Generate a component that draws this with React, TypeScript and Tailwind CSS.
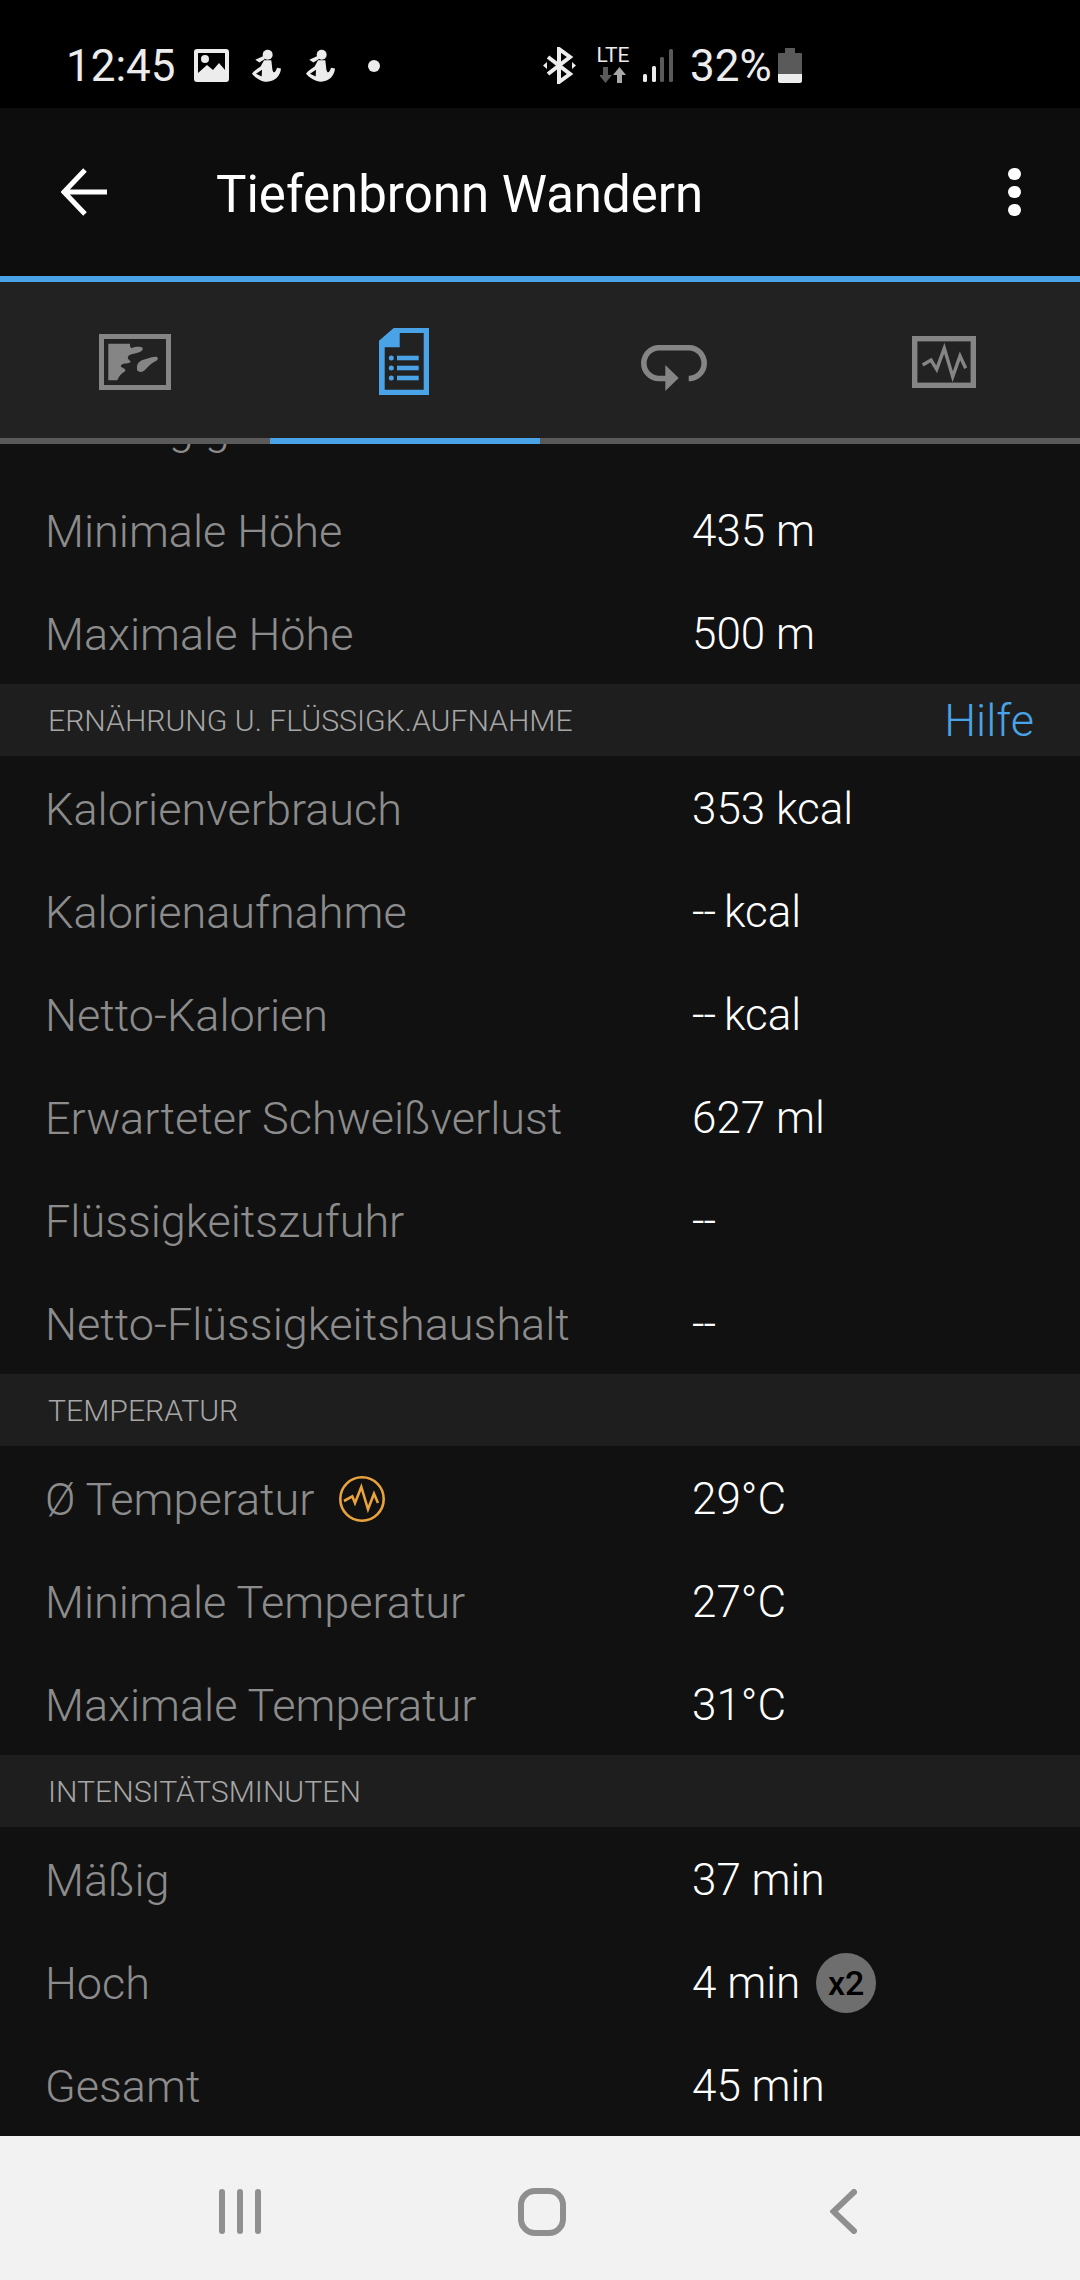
const FONT = "font-['Roboto',sans-serif]";

function Person() {
  return (
    <svg width="29" height="33" viewBox="0 0 87 98" fill="#ececec">
      <circle cx="47" cy="17" r="15" />
      <path d="M10 32 L36 20 L38 30 L22 40 Z" />
      <path
        fillRule="evenodd"
        d="M36 33 H58 L61 60 C63 72 70 74 75 56 L87 58 C85 80 70 96 45 98 C30 98 10 86 0 74 C4 66 14 60 26 52 Z M12 74 L30 62 L29 82 Z"
      />
    </svg>
  );
}

function StatusBar() {
  return (
    <div className="h-[108px] bg-black flex items-center pl-[66px] pt-[23px] text-[44px] leading-none text-[#ececec]">
      <span className="w-[128px]">12:45</span>
      <svg width="35" height="33" viewBox="0 0 35 33" className="-mt-[1px]">
        <path
          fill="#ececec"
          fillRule="evenodd"
          d="M3 0 H32 A3 3 0 0 1 35 3 V30 A3 3 0 0 1 32 33 H3 A3 3 0 0 1 0 30 V3 A3 3 0 0 1 3 0 Z M4 4 V24 L13 16 L19 21 L25 14 L31 21 V4 Z"
        />
        <circle cx="11" cy="10" r="4" fill="#ececec" />
      </svg>
      <div className="ml-[23px] -mt-[1px]">
        <Person />
      </div>
      <div className="ml-[25px] -mt-[1px]">
        <Person />
      </div>
      <div className="ml-[33px] w-[12px] h-[12px] rounded-full bg-[#ececec]" />

      <svg width="33" height="37" viewBox="0 0 33 37" className="ml-[163px]" fill="none" stroke="#ececec" strokeWidth="4">
        <path d="M5 10 L27 27 L16 35 V2 L27 10 L5 27" />
        <path d="M0 18.5 L4 15 V22 Z M33 18.5 L29 15 V22 Z" fill="#ececec" stroke="none" />
      </svg>
      <div className="ml-[20px] w-[34px] flex flex-col items-center -mt-[1px]">
        <span className="text-[21px] leading-[16px]">LTE</span>
        <svg width="26" height="16" viewBox="0 0 26 16" className="mt-[4px]">
          <path d="M3 0 H8 V8 H12 L5.5 16 L-1 8 H3 Z" fill="#5a5a5a" />
          <path d="M17 16 H22 V8 H26 L19.5 0 L13 8 H17 Z" fill="#a8a8a8" />
        </svg>
      </div>
      <svg width="30" height="33" viewBox="0 0 30 33" className="ml-[13px]">
        <rect x="0" y="25" width="4" height="8" rx="1.5" fill="#ececec" />
        <rect x="9" y="17" width="4" height="16" rx="1.5" fill="#ececec" />
        <rect x="17" y="8" width="4" height="25" rx="1.5" fill="#5a5a5a" />
        <rect x="26" y="0" width="4" height="33" rx="1.5" fill="#5a5a5a" />
      </svg>
      <span className="ml-[17px] w-[88px]">32%</span>
      <svg width="24" height="35" viewBox="0 0 24 35" className="-mt-[1px]">
        <path d="M7 0 H17 V5 H23 A1 1 0 0 1 24 6 V26 H0 V6 A1 1 0 0 1 1 5 H7 Z" fill="#5a5a5a" />
        <path d="M0 26 H24 V33 A2 2 0 0 1 22 35 H2 A2 2 0 0 1 0 33 Z" fill="#ececec" />
      </svg>
    </div>
  );
}

function AppBar() {
  return (
    <div className="h-[168px] bg-[#0d0d0d] flex items-center pl-[61px] pr-[59px]">
      <svg width="48" height="48" viewBox="0 0 48 48" fill="none" stroke="white" strokeWidth="5">
        <path d="M46 24 H3 M24 2 L3 24 L24 46" />
      </svg>
      <h1 className="ml-[107px] flex-1 text-[51px] leading-none text-white mt-[4px]">Tiefenbronn Wandern</h1>
      <div className="flex flex-col gap-[6px]">
        <div className="w-[13px] h-[12px] rounded-full bg-white" />
        <div className="w-[13px] h-[12px] rounded-full bg-white" />
        <div className="w-[13px] h-[12px] rounded-full bg-white" />
      </div>
    </div>
  );
}

function Tabs() {
  return (
    <div className="bg-[#222222] border-t-[6px] border-[#4aa3e6]">
      <div className="h-[156px] grid grid-cols-4">
        <div className="flex justify-start items-start pl-[99px] pt-[52px]">
          <svg width="72" height="56" viewBox="0 0 72 56" fill="#858585">
            <path fillRule="evenodd" d="M0 0 H72 V56 H0 Z M5 5 V51 H67 V5 Z" />
            <path d="M9.3 9.7 H31 C31 12 31 14 33 14 C36 13 41 12 43.7 14 C44 17 41 18 38 19 C34 20 30 20 29 23 C28 25 31 26 31.7 28 C29 30 26 29 24 30 C21 31 21 33 24 34 C27 35 27 37 25 38 C22 40 20 42 18.3 46.3 H9.3 Z" />
            <path d="M38 32 C39 28 42 26 47 25 C51 24 55 22 58 23 C60 25 58 27 55 28 C51 30 49 33 46 36 C43 39 39 38 38 36 Z" />
          </svg>
        </div>
        <div className="flex justify-start items-start pl-[109px] pt-[46px]">
          <svg width="50" height="67" viewBox="0 0 50 67" fill="#4aa3e6">
            <path fillRule="evenodd" d="M0 12.7 L14.7 0 H50 V67 H0 Z M20.7 5 V19.3 H5.7 V61.7 H44.7 V5 Z" />
            <rect x="18" y="27.7" width="21.7" height="4.6" />
            <rect x="18" y="37.7" width="21.7" height="4.6" />
            <rect x="18" y="47.7" width="21.7" height="4.6" />
            <circle cx="12.3" cy="30" r="2.5" />
            <circle cx="12.3" cy="40" r="2.5" />
            <circle cx="12.3" cy="50" r="2.5" />
          </svg>
        </div>
        <div className="flex justify-start items-start pl-[100px] pt-[63px]">
          <svg width="68" height="46" viewBox="0 0 68 46" fill="none">
            <path
              d="M27 33.5 H18 A15.4 15.4 0 0 1 18 2.8 H50 A15.4 15.4 0 0 1 50 33.5 H48.7"
              stroke="#858585"
              strokeWidth="5.6"
            />
            <path d="M25.3 20 L38.7 33 L25.3 46 Z" fill="#858585" />
          </svg>
        </div>
        <div className="flex justify-start items-start pl-[102px] pt-[54px]">
          <svg width="64" height="52" viewBox="0 0 64 52" fill="none" stroke="#858585">
            <rect x="2.7" y="2.7" width="58.6" height="46.6" strokeWidth="5.4" />
            <path d="M10.7 29 L19 24 L24.7 33.3 L32.3 12.3 L40.7 40.7 L48 20 L53.7 32.3" strokeWidth="3.4" />
          </svg>
        </div>
      </div>
      <div className="h-[6px] grid grid-cols-4 bg-[#5a5a5a]">
        <div />
        <div className="bg-[#4aa3e6]" />
      </div>
    </div>
  );
}

function Section({ title, help }: { title: string; help?: string }) {
  return (
    <div className="h-[72px] bg-[#1e1e1e] flex items-center justify-between pl-[48px] pr-[46px]">
      <span className="text-[30.2px] font-light text-[#a6a6a6] uppercase leading-none pt-[2px]">{title}</span>
      {help && <span className="text-[45px] font-light text-[#4aa3e6] leading-none">{help}</span>}
    </div>
  );
}

function Dashes() {
  return <span className="tracking-[-1px] -mr-[2px]">--</span>;
}

function Row({ label, value, labelIcon, valueIcon }: { label: string; value: React.ReactNode; labelIcon?: React.ReactNode; valueIcon?: React.ReactNode }) {
  return (
    <div className="h-[103px] flex items-center pl-[45px] font-light">
      <div className="w-[647px] flex items-center text-[45px] text-[#8c8c8c] leading-none pt-[3px]">
        {label}
        {labelIcon}
      </div>
      <div className="flex items-center text-[44px] text-white leading-none pt-[2px] whitespace-pre">
        {value}
        {valueIcon}
      </div>
    </div>
  );
}

function EffortIcon() {
  return (
    <svg width="46" height="46" viewBox="0 0 46 46" fill="none" stroke="#e8a33d" strokeWidth="2.6" className="ml-[25px]">
      <circle cx="23" cy="23" r="21.7" />
      <path d="M5 25 L13.3 20.3 L16 27 L22.3 11 L29 33.3 L35 17.7 L39 27" />
    </svg>
  );
}

function NavBar() {
  return (
    <div className="h-[144px] bg-[#f2f2f2] flex items-center pl-[219px] pt-[7px]">
      <div className="flex gap-[12px]">
        <div className="w-[6px] h-[45px] rounded-full bg-[#8f8f8f]" />
        <div className="w-[6px] h-[45px] rounded-full bg-[#8f8f8f]" />
        <div className="w-[6px] h-[45px] rounded-full bg-[#8f8f8f]" />
      </div>
      <div className="ml-[257px] w-[48px] h-[48px] border-[6px] border-[#8f8f8f] rounded-[17px]" />
      <svg width="27" height="45" viewBox="0 0 27 45" fill="none" stroke="#8f8f8f" strokeWidth="6" strokeLinecap="round" className="ml-[264px]">
        <path d="M24 3 L3.5 22.5 L24 42" />
      </svg>
    </div>
  );
}

export default function App() {
  return (
    <div className={`w-[1080px] h-[2280px] flex flex-col bg-[#111111] overflow-hidden ${FONT}`}>
      <StatusBar />
      <AppBar />
      <Tabs />
      <div className="flex-1 overflow-hidden">
        <div className="-mt-[69px]">
          <Row label="Abstieg gesamt" value="" />
          <Row label="Minimale Höhe" value="435 m" />
          <Row label="Maximale Höhe" value="500 m" />
          <Section title="Ernährung u. Flüssigk.aufnahme" help="Hilfe" />
          <Row label="Kalorienverbrauch" value="353 kcal" />
          <Row label="Kalorienaufnahme" value={<><Dashes /> kcal</>} />
          <Row label="Netto-Kalorien" value={<><Dashes /> kcal</>} />
          <Row label="Erwarteter Schweißverlust" value="627 ml" />
          <Row label="Flüssigkeitszufuhr" value={<Dashes />} />
          <Row label="Netto-Flüssigkeitshaushalt" value={<Dashes />} />
          <Section title="Temperatur" />
          <Row label="Ø Temperatur" value="29°C" labelIcon={<EffortIcon />} />
          <Row label="Minimale Temperatur" value="27°C" />
          <Row label="Maximale Temperatur" value="31°C" />
          <Section title="Intensitätsminuten" />
          <Row label="Mäßig" value="37 min" />
          <Row
            label="Hoch"
            value="4 min"
            valueIcon={
              <span className="ml-[16px] w-[60px] h-[60px] rounded-full bg-[#6e6e6e] flex items-center justify-center text-[34px] font-medium text-black">
                x2
              </span>
            }
          />
          <Row label="Gesamt" value="45 min" />
        </div>
      </div>
      <NavBar />
    </div>
  );
}
